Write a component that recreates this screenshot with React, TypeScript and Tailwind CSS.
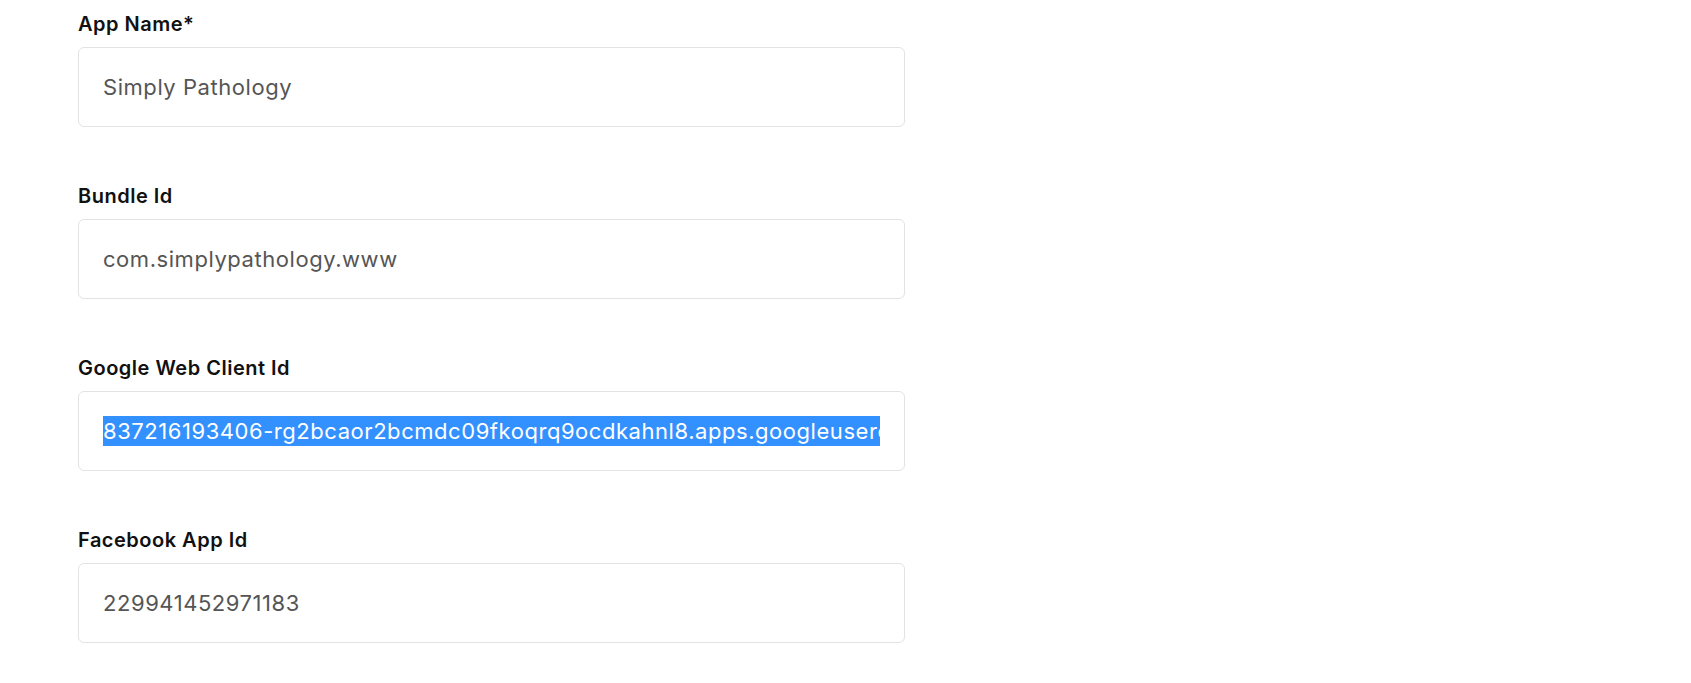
import React from 'react';

const fields = [
  { label: 'App Name*', value: 'Simply Pathology' },
  { label: 'Bundle Id', value: 'com.simplypathology.www' },
  { label: 'Google Web Client Id', value: '837216193406-rg2bcaor2bcmdc09fkoqrq9ocdkahnl8.apps.googleusercontent.com', selected: true },
  { label: 'Facebook App Id', value: '229941452971183' },
];

export default function App() {
  return (
    <div className="min-h-screen w-full bg-white pl-[78px] pt-[10px] font-['Inter',sans-serif]">
      <div className="flex w-[827px] flex-col">
        {fields.map((f) => (
          <div key={f.label} className="mb-[55px] flex flex-col">
            <label className="mb-[9px] text-[20px] leading-[28px] font-semibold tracking-[0.5px] text-[#111]">{f.label}</label>
            {f.selected ? (
              <div className="flex h-[80px] items-center overflow-hidden rounded-md border border-[#e3e3e3] px-6">
                <div className="w-full overflow-hidden whitespace-nowrap">
                  <span className="inline-block bg-[#3390ff] text-[22px] leading-[30px] tracking-[0.55px] text-white">{f.value}</span>
                </div>
              </div>
            ) : (
              <input
                readOnly
                value={f.value}
                className="h-[80px] rounded-md border border-[#e3e3e3] px-6 text-[22px] tracking-[0.55px] text-[#555] outline-none"
              />
            )}
          </div>
        ))}
      </div>
    </div>
  );
}
